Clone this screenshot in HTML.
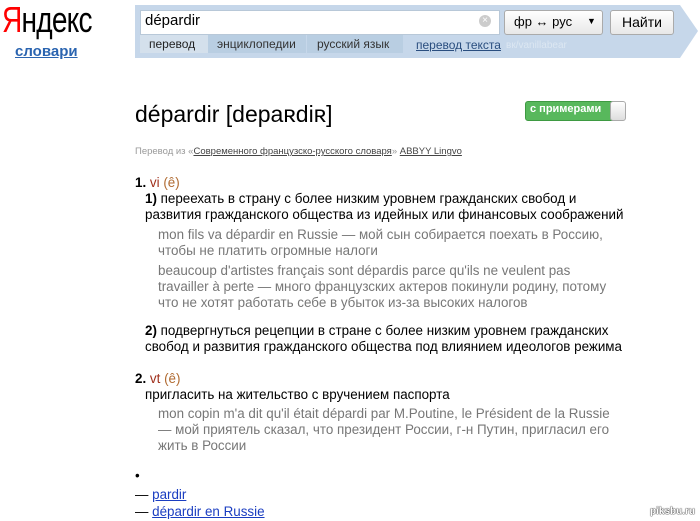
<!DOCTYPE html>
<html><head><meta charset="utf-8"><style>
body{margin:0;width:700px;height:521px;background:#fff;font-family:"Liberation Sans",Arial,sans-serif;position:relative;overflow:hidden}
.a{position:absolute;white-space:nowrap}
.t{font-size:13.4px;color:#000;line-height:16px}
.g{font-size:13.4px;color:#777;line-height:16px}
a{color:#1a3dc1;text-decoration:underline}
</style></head><body>
<div class="a" style="left:2px;top:0;font-size:36px;letter-spacing:-1px;line-height:40px;transform:scaleX(0.78);transform-origin:left"><span style="color:#f00">Я</span>ндекс</div>
<div class="a" style="left:15px;top:43px;font-size:15px;font-weight:bold"><a style="color:#2a64b0">словари</a></div>
<svg class="a" style="left:135px;top:5px" width="565" height="54"><polygon points="0,0 545,0 563,26 545,53 0,53" fill="#c6d7ea"/></svg>
<div class="a" style="left:140px;top:10px;width:358px;height:23px;background:#fff;border:1px solid #b8c8d8"></div>
<div class="a" style="left:145px;top:12px;font-size:15px">dépardir</div>
<div class="a" style="left:479px;top:15px;width:12px;height:12px;border-radius:50%;background:#ccc;color:#fff;font-size:10px;line-height:12px;text-align:center">×</div>
<div class="a" style="left:140px;top:35px;width:68px;height:18px;background:#d4e0ec"></div>
<div class="a" style="left:208px;top:35px;width:98px;height:18px;background:#b9cee2"></div>
<div class="a" style="left:307px;top:35px;width:96px;height:18px;background:#b9cee2"></div>
<div class="a" style="left:149px;top:37px;font-size:12px;color:#222">перевод</div>
<div class="a" style="left:217px;top:37px;font-size:12px;color:#333">энциклопедии</div>
<div class="a" style="left:317px;top:37px;font-size:12px;color:#333">русский язык</div>
<div class="a" style="left:416px;top:38px;font-size:12px"><a style="color:#2a4e7f">перевод текста</a></div>
<div class="a" style="left:506px;top:40px;font-size:10px;color:#dce7f2">вк/vanillabear</div>
<div class="a" style="left:504px;top:10px;width:97px;height:23px;background:linear-gradient(#fff,#e8e8e8);border:1px solid #aaa;border-radius:3px"></div>
<div class="a" style="left:514px;top:14px;font-size:13px">фр ↔ рус</div>
<div class="a" style="left:587px;top:16px;font-size:9px">▼</div>
<div class="a" style="left:610px;top:10px;width:62px;height:23px;background:linear-gradient(#fff,#e8e8e8);border:1px solid #aaa;border-radius:3px;font-size:14px;line-height:23px;text-align:center">Найти</div>
<div class="a" style="left:135px;top:101px;font-size:23px;color:#000">dépardir [depaʀdiʀ]</div>
<div class="a" style="left:525px;top:101px;width:98px;height:18px;background:#58b85c;border:1px solid #3e9a42;border-radius:3px"></div>
<div class="a" style="left:530px;top:103px;font-size:11px;color:#fff;font-weight:bold">с примерами</div>
<div class="a" style="left:610px;top:101px;width:14px;height:18px;background:linear-gradient(#fff,#ddd);border:1px solid #aaa;border-radius:3px"></div>
<div class="a" style="left:135px;top:146px;font-size:9.5px;color:#999">Перевод из «<a style="color:#444">Современного французско-русского словаря</a>» <a style="color:#444">ABBYY Lingvo</a></div>
<div class="a t" style="left:135px;top:175px"><b>1.</b> <span style="color:#a0301c">vi</span> <span style="color:#b06a30">(ê)</span></div>
<div class="a t" style="left:145px;top:191px"><b>1)</b> переехать в страну с более низким уровнем гражданских свобод и</div>
<div class="a t" style="left:145px;top:207px">развития гражданского общества из идейных или финансовых соображений</div>
<div class="a g" style="left:158px;top:227px">mon fils va dépardir en Russie — мой сын собирается поехать в Россию,</div>
<div class="a g" style="left:158px;top:243px">чтобы не платить огромные налоги</div>
<div class="a g" style="left:158px;top:263px">beaucoup d'artistes français sont dépardis parce qu'ils ne veulent pas</div>
<div class="a g" style="left:158px;top:279px">travailler à perte — много французских актеров покинули родину, потому</div>
<div class="a g" style="left:158px;top:295px">что не хотят работать себе в убыток из-за высоких налогов</div>
<div class="a t" style="left:145px;top:323px"><b>2)</b> подвергнуться рецепции в стране с более низким уровнем гражданских</div>
<div class="a t" style="left:145px;top:339px">свобод и развития гражданского общества под влиянием идеологов режима</div>
<div class="a t" style="left:135px;top:371px"><b>2.</b> <span style="color:#a0301c">vt</span> <span style="color:#b06a30">(ê)</span></div>
<div class="a t" style="left:145px;top:387px">пригласить на жительство с вручением паспорта</div>
<div class="a g" style="left:158px;top:406px">mon copin m'a dit qu'il était dépardi par M.Poutine, le Président de la Russie</div>
<div class="a g" style="left:158px;top:422px">— мой приятель сказал, что президент России, г-н Путин, пригласил его</div>
<div class="a g" style="left:158px;top:438px">жить в России</div>
<div class="a t" style="left:135px;top:468px">•</div>
<div class="a t" style="left:135px;top:487px">— <a>pardir</a></div>
<div class="a t" style="left:135px;top:504px">— <a>dépardir en Russie</a></div>
<div class="a" style="left:650px;top:506px;font-size:10px;font-weight:bold;color:#fff;text-shadow:0 0 1px #000,0 0 1px #000">piksbu.ru</div>
</body></html>
